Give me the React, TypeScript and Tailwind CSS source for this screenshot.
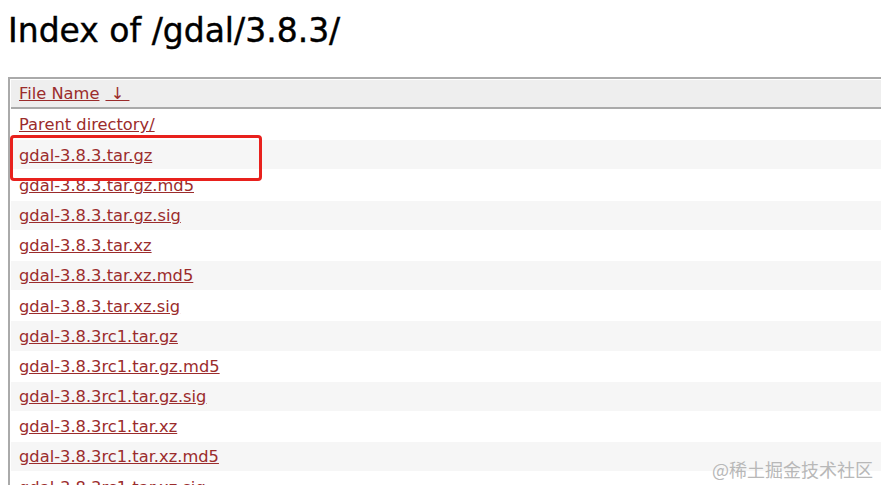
const files = [
  "Parent directory/",
  "gdal-3.8.3.tar.gz",
  "gdal-3.8.3.tar.gz.md5",
  "gdal-3.8.3.tar.gz.sig",
  "gdal-3.8.3.tar.xz",
  "gdal-3.8.3.tar.xz.md5",
  "gdal-3.8.3.tar.xz.sig",
  "gdal-3.8.3rc1.tar.gz",
  "gdal-3.8.3rc1.tar.gz.md5",
  "gdal-3.8.3rc1.tar.gz.sig",
  "gdal-3.8.3rc1.tar.xz",
  "gdal-3.8.3rc1.tar.xz.md5",
  "gdal-3.8.3rc1.tar.xz.sig",
];

export default function App() {
  return (
    <div className="relative h-[485px] w-[881px] overflow-hidden bg-white font-['DejaVu_Sans',sans-serif]">
      <h1 className="pl-[8px] pt-[11px] text-[33px] leading-[40px] text-black [-webkit-text-stroke:0.4px_black]">Index of /gdal/3.8.3/</h1>
      <table className="mt-[26px] ml-[8px] w-[900px] border-separate border-spacing-[1px] border-t-2 border-l-2 border-[#aaa] text-[16.3px]">
        <thead>
          <tr>
            <th className="h-[29px] border-b-2 border-[#aaa] bg-[#eee] pl-[8px] pt-[1px] text-left font-normal">
              <a className="text-[#9b2c2c] underline">File Name</a>
              <a className="ml-[6px] text-[#9b2c2c] underline">&nbsp;↓&nbsp;</a>
            </th>
          </tr>
        </thead>
        <tbody>
          {files.map((f, i) => (
            <tr key={f} className={i % 2 === 1 ? "bg-[#f6f6f6]" : ""}>
              <td className="h-[29.2px] pl-[8px] pt-[2px]">
                <a className="text-[#9b2c2c] underline">{f}</a>
              </td>
            </tr>
          ))}
        </tbody>
      </table>
      {/* highlight box */}
      <div className="absolute left-[10px] top-[135px] h-[46px] w-[252px] rounded-[4px] border-[3px] border-[#e8211d]" />
      <div className="absolute right-[8px] top-[456px] text-[18px] text-[#b8b8b8] font-['Noto_Sans_CJK_SC',sans-serif]">@稀土掘金技术社区</div>
    </div>
  );
}
